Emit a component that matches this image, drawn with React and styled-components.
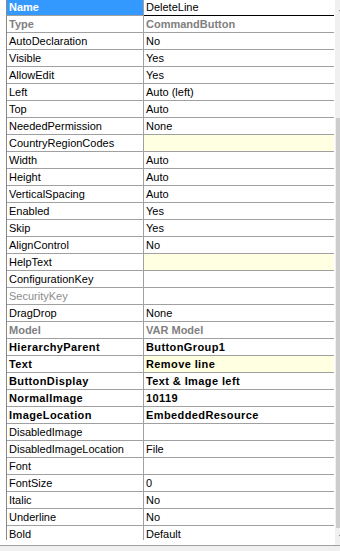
import React from "react";
import styled, { createGlobalStyle, css } from "styled-components";

const GlobalStyle = createGlobalStyle`
  html, body {
    margin: 0;
    padding: 0;
    background: #ffffff;
    overflow: hidden;
  }
  #root {
    width: 340px;
    height: 551px;
    overflow: hidden;
  }
`;

const Frame = styled.div`
  width: 340px;
  height: 551px;
  overflow: hidden;
  display: flex;
  flex-direction: column;
  background: #ffffff;
  font-family: "Liberation Sans", Arial, sans-serif;
  font-size: 11px;
`;

const Main = styled.div`
  display: flex;
  align-items: flex-start;
  height: 545px;
  flex: 0 0 545px;
`;

const GridView = styled.div`
  flex: 0 0 328px;
  height: 540px;
  margin-left: 6px;
  overflow: hidden;
  border-left: 1px solid #8a8a8a;
  box-sizing: border-box;
`;

const Rows = styled.div`
  display: flex;
  flex-direction: column;
  margin-top: -1px;
`;

const Row = styled.div`
  display: grid;
  grid-template-columns: 137px 190px;
  height: 17px;
`;

const textVariant = css`
  ${({ $kind }) =>
    $kind === "grey" &&
    css`
      color: #808080;
      font-weight: bold;
    `}
  ${({ $kind }) =>
    $kind === "bold" &&
    css`
      color: #000000;
      font-weight: bold;
      letter-spacing: 0.4px;
    `}
  ${({ $kind }) =>
    $kind === "disabled" &&
    css`
      color: #8c8c8c;
    `}
`;

const LabelCell = styled.div`
  box-sizing: border-box;
  height: 17px;
  line-height: 16px;
  padding-left: 2px;
  border-right: 1px solid #a0a0a0;
  border-bottom: 1px solid #a0a0a0;
  white-space: nowrap;
  overflow: hidden;
  color: #000000;
  background: ${({ $selected }) => ($selected ? "#3399ff" : "transparent")};
  ${textVariant}
  ${({ $selected }) =>
    $selected &&
    css`
      color: #ffffff;
      font-weight: bold;
    `}
`;

const ValueCell = styled.div`
  box-sizing: border-box;
  height: 17px;
  line-height: 16px;
  padding-left: 2px;
  border-bottom: 1px solid ${({ $selected }) => ($selected ? "#000000" : "#a0a0a0")};
  white-space: nowrap;
  overflow: hidden;
  color: #000000;
  background: ${({ $yellow }) => ($yellow ? "#ffffe1" : "transparent")};
  ${textVariant}
`;

const Gap = styled.div`
  flex: 0 0 1px;
`;

const ScrollBar = styled.div`
  flex: 0 0 17px;
  height: 545px;
  background: #f0f0f0;
  display: flex;
  flex-direction: column;
`;

const ArrowButton = styled.div`
  flex: 0 0 17px;
  display: flex;
  align-items: center;
  justify-content: center;
`;

const Thumb = styled.div`
  flex: 0 0 ${({ $size }) => $size}px;
  margin: ${({ $offset }) => $offset}px 0 0 1px;
  width: 15px;
  background: #cdcdcd;
`;

const Spacer = styled.div`
  flex: 1 1 auto;
`;

const BottomBar = styled.div`
  flex: 1 1 auto;
  border-top: 1px solid #a0a0a0;
  background: #f0f0f0;
`;

const props = [
  { name: "Name", value: "DeleteLine", selected: true },
  { name: "Type", value: "CommandButton", kind: "grey" },
  { name: "AutoDeclaration", value: "No" },
  { name: "Visible", value: "Yes" },
  { name: "AllowEdit", value: "Yes" },
  { name: "Left", value: "Auto (left)" },
  { name: "Top", value: "Auto" },
  { name: "NeededPermission", value: "None" },
  { name: "CountryRegionCodes", value: "", yellow: true },
  { name: "Width", value: "Auto" },
  { name: "Height", value: "Auto" },
  { name: "VerticalSpacing", value: "Auto" },
  { name: "Enabled", value: "Yes" },
  { name: "Skip", value: "Yes" },
  { name: "AlignControl", value: "No" },
  { name: "HelpText", value: "", yellow: true },
  { name: "ConfigurationKey", value: "" },
  { name: "SecurityKey", value: "", kind: "disabled" },
  { name: "DragDrop", value: "None" },
  { name: "Model", value: "VAR Model", kind: "grey" },
  { name: "HierarchyParent", value: "ButtonGroup1", kind: "bold" },
  { name: "Text", value: "Remove line", kind: "bold", yellow: true },
  { name: "ButtonDisplay", value: "Text & Image left", kind: "bold" },
  { name: "NormalImage", value: "10119", kind: "bold" },
  { name: "ImageLocation", value: "EmbeddedResource", kind: "bold" },
  { name: "DisabledImage", value: "" },
  { name: "DisabledImageLocation", value: "File" },
  { name: "Font", value: "" },
  { name: "FontSize", value: "0" },
  { name: "Italic", value: "No" },
  { name: "Underline", value: "No" },
  { name: "Bold", value: "Default" },
];

function UpArrow() {
  return (
    <svg width="9" height="6" viewBox="0 0 9 6">
      <polyline points="0.5,5 4.5,1 8.5,5" fill="none" stroke="#606060" strokeWidth="1.2" />
    </svg>
  );
}

function DownArrow() {
  return (
    <svg width="9" height="6" viewBox="0 0 9 6">
      <polyline points="0.5,1 4.5,5 8.5,1" fill="none" stroke="#606060" strokeWidth="1.2" />
    </svg>
  );
}

export default function App() {
  return (
    <>
      <GlobalStyle />
      <Frame>
        <Main>
          <GridView>
            <Rows>
              {props.map((p) => (
                <Row key={p.name}>
                  <LabelCell $kind={p.kind} $selected={p.selected}>
                    {p.name}
                  </LabelCell>
                  <ValueCell $kind={p.kind} $yellow={p.yellow} $selected={p.selected}>
                    {p.value}
                  </ValueCell>
                </Row>
              ))}
            </Rows>
          </GridView>
          <Gap />
          <ScrollBar>
            <ArrowButton>
              <UpArrow />
            </ArrowButton>
            <Thumb $offset={101} $size={410} />
            <Spacer />
            <ArrowButton>
              <DownArrow />
            </ArrowButton>
          </ScrollBar>
        </Main>
        <BottomBar />
      </Frame>
    </>
  );
}
